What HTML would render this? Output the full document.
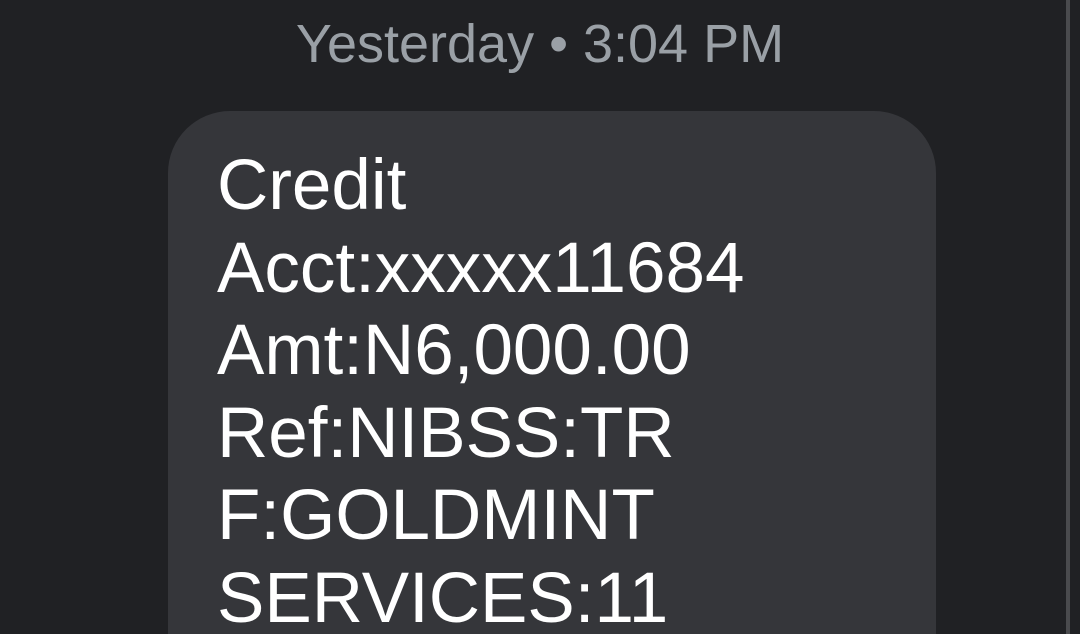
<!DOCTYPE html>
<html><head><style>
html,body{margin:0;padding:0;width:1080px;height:634px;overflow:hidden;}
body{background:#202124;position:relative;font-family:"Liberation Sans",sans-serif;}
.hdr{position:absolute;top:14px;left:0;width:1080px;text-align:center;color:#9aa0a6;font-size:54px;line-height:60px;}
.bar{position:absolute;left:1066px;top:0;width:4px;height:634px;background:#4a4b4e;}
.bub{position:absolute;left:168px;top:111px;width:768px;height:523px;background:#35363a;border-radius:62px 62px 0 0;}
.txt{position:absolute;left:217px;top:145px;color:#fff;font-size:71px;line-height:82.5px;white-space:pre;}
</style></head><body>
<div class="hdr">Yesterday • 3:04 PM</div>
<div class="bar"></div>
<div class="bub"></div>
<div class="txt">Credit
Acct:xxxxx11684
Amt:N6,000.00
Ref:NIBSS:TR
F:GOLDMINT
SERVICES:11</div>
</body></html>
